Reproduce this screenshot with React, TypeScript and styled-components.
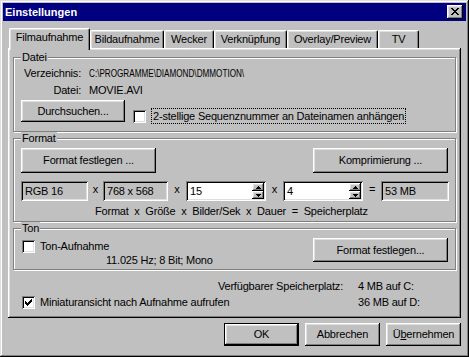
import React from "react";
import styled, { createGlobalStyle, css } from "styled-components";

const GlobalStyle = createGlobalStyle`
  html, body { margin: 0; padding: 0; background: #c0c0c0; }
  body {
    font-family: "Liberation Sans", Arial, sans-serif;
    font-size: 11px;
    line-height: 13px;
    letter-spacing: -0.2px;
    color: #000;
  }
  *, *::before, *::after { box-sizing: border-box; }
`;

const raised = css`
  box-shadow: inset -1px -1px #000, inset 1px 1px #fff, inset -2px -2px #808080,
    inset 2px 2px #dfdfdf;
`;

const sunken = css`
  box-shadow: inset 1px 1px #808080, inset -1px -1px #fff, inset 2px 2px #000,
    inset -2px -2px #dfdfdf;
`;

const Window = styled.div`
  width: 469px;
  height: 357px;
  background: #c0c0c0;
  padding: 3px;
  box-shadow: inset -1px -1px #000, inset 1px 1px #dfdfdf, inset -2px -2px #808080,
    inset 2px 2px #fff;
  display: flex;
  flex-direction: column;
`;

const TitleBar = styled.div`
  height: 18px;
  flex: none;
  background: #000080;
  color: #fff;
  display: flex;
  align-items: center;
  justify-content: space-between;
  padding: 0 3px 0 2px;
`;

const TitleText = styled.span`
  font-weight: bold;
  font-size: 11px;
  letter-spacing: 0;
`;

const CloseButton = styled.div`
  width: 16px;
  height: 14px;
  background: #c0c0c0;
  ${raised};
  display: flex;
  justify-content: center;
  padding-top: 3px;
`;

const Body = styled.div`
  flex: 1;
  display: flex;
  flex-direction: column;
  padding: 7px 5px 0 5px;
`;

const TabStrip = styled.div`
  display: flex;
  align-items: flex-end;
  height: 20px;
  padding-left: 1px;
`;

const Tab = styled.div<{ $w: number; $active?: boolean }>`
  position: relative;
  z-index: ${(p) => (p.$active ? 2 : 1)};
  width: ${(p) => p.$w}px;
  height: ${(p) => (p.$active ? 22 : 18)}px;
  margin-bottom: ${(p) => (p.$active ? -2 : 0)}px;
  background: #c0c0c0;
  border-top: 1px solid #fff;
  border-left: 1px solid #fff;
  border-right: 1px solid #000;
  border-radius: 2px 2px 0 0;
  box-shadow: inset -1px 0 #808080, inset 1px 1px #dfdfdf;
  text-align: center;
  padding-top: 2px;
  white-space: nowrap;
`;

const Panel = styled.div`
  height: 270px;
  flex: none;
  display: flex;
  flex-direction: column;
  gap: 6px;
  padding: 9px 5px 0 5px;
  box-shadow: inset -1px -1px #000, inset 1px 1px #fff, inset -2px -2px #808080,
    inset 2px 2px #dfdfdf;
`;

const Group = styled.div<{ $h: number }>`
  position: relative;
  flex: none;
  height: ${(p) => p.$h}px;
  border: 1px solid #808080;
  box-shadow: inset 1px 1px #fff, 1px 1px #fff;
  padding: 9px 7px 0 7px;
`;

const Legend = styled.span`
  position: absolute;
  top: -7px;
  left: 7px;
  padding: 0 1px;
  background: #c0c0c0;
`;

const InfoGrid = styled.div`
  display: grid;
  grid-template-columns: 60px auto;
  column-gap: 8px;
  row-gap: 4px;
`;

const InfoLabel = styled.span`
  text-align: right;
`;

const PathText = styled.span`
  display: inline-block;
  white-space: nowrap;
  letter-spacing: 0;
  transform: scaleX(0.74);
  transform-origin: left center;
`;

const Row = styled.div<{ $mt?: number; $justify?: string }>`
  display: flex;
  align-items: flex-start;
  justify-content: ${(p) => p.$justify || "flex-start"};
  margin-top: ${(p) => p.$mt || 0}px;
`;

const Button = styled.div<{ $w: number; $h: number; $default?: boolean }>`
  width: ${(p) => p.$w}px;
  height: ${(p) => p.$h}px;
  flex: none;
  background: #c0c0c0;
  display: flex;
  align-items: center;
  justify-content: center;
  white-space: nowrap;
  ${(p) =>
    p.$default
      ? css`
          border: 1px solid #000;
          ${raised};
        `
      : raised};
`;

const CheckRow = styled.div<{ $mt?: number; $ml?: number; $gap?: number }>`
  display: flex;
  align-items: center;
  gap: ${(p) => p.$gap ?? 5}px;
  margin-top: ${(p) => p.$mt || 0}px;
  margin-left: ${(p) => p.$ml || 0}px;
  white-space: nowrap;
`;

const CheckBox = styled.div`
  width: 13px;
  height: 13px;
  flex: none;
  background: #fff;
  ${sunken};
  padding: 3px;
  display: flex;
`;

const FocusLabel = styled.span`
  outline: 1px dotted #000;
  outline-offset: -1px;
  padding: 1px 2px;
  line-height: 14px;
`;

const FieldRow = styled.div`
  display: flex;
  align-items: center;
  height: 20px;
  margin-top: 8px;
`;

const Field = styled.div<{ $w: number; $edit?: boolean }>`
  width: ${(p) => p.$w}px;
  height: 20px;
  flex: none;
  background: ${(p) => (p.$edit ? "#fff" : "#c0c0c0")};
  ${sunken};
  padding: 2px 2px 2px 4px;
  display: flex;
  align-items: center;
  justify-content: space-between;
  white-space: nowrap;
`;

const Op = styled.span<{ $w: number }>`
  width: ${(p) => p.$w}px;
  text-align: center;
  flex: none;
  margin-top: -3px;
`;

const Spinner = styled.div`
  width: 12px;
  height: 16px;
  display: flex;
  flex-direction: column;
`;

const SpinButton = styled.div`
  flex: 1;
  background: #c0c0c0;
  ${raised};
  display: flex;
  align-items: center;
  justify-content: center;
`;

const Caption = styled.div`
  margin-top: 4px;
  padding-left: 74px;
  white-space: pre;
`;

const TonBody = styled.div`
  display: flex;
  justify-content: space-between;
  align-items: flex-start;
`;

const TonLeft = styled.div`
  display: flex;
  flex-direction: column;
  margin-top: 2px;
`;

const TonInfo = styled.div`
  margin-top: 1px;
  padding-left: 85px;
  white-space: nowrap;
`;

const Storage = styled.div`
  margin-top: 2px;
  display: grid;
  grid-template-columns: 1fr auto 98px;
  grid-template-rows: 16px 16px;
  column-gap: 15px;
  align-items: center;
  padding-left: 9px;
  white-space: nowrap;
`;

const SpanTwo = styled.div`
  grid-column: 1 / 3;
`;

const ButtonBar = styled.div`
  display: flex;
  justify-content: flex-end;
  gap: 6px;
  margin-top: 5px;
`;

const CloseGlyph = () => (
  <svg width="8" height="7" viewBox="0 0 8 7" shapeRendering="crispEdges">
    <path
      fill="#000"
      d="M0 0h2v1H0z M6 0h2v1H6z M1 1h2v1H1z M5 1h2v1H5z M2 2h4v1H2z M3 3h2v1H3z M2 4h4v1H2z M1 5h2v1H1z M5 5h2v1H5z M0 6h2v1H0z M6 6h2v1H6z"
    />
  </svg>
);

const CheckGlyph = () => (
  <svg width="7" height="7" viewBox="0 0 7 7" shapeRendering="crispEdges">
    <path
      fill="#000"
      d="M0 2h1v3H0z M1 3h1v3H1z M2 4h1v3H2z M3 3h1v3H3z M4 2h1v3H4z M5 1h1v3H5z M6 0h1v3H6z"
    />
  </svg>
);

const Arrow = ({ down }: { down?: boolean }) => (
  <svg width="5" height="3" viewBox="0 0 5 3" shapeRendering="crispEdges">
    <path
      fill="#000"
      d={down ? "M0 0h5v1H0z M1 1h3v1H1z M2 2h1v1H2z" : "M2 0h1v1H2z M1 1h3v1H1z M0 2h5v1H0z"}
    />
  </svg>
);

const Check = ({ checked }: { checked?: boolean }) => (
  <CheckBox>{checked && <CheckGlyph />}</CheckBox>
);

const SpinField = ({ w, value }: { w: number; value: string }) => (
  <Field $w={w} $edit style={{ paddingRight: 2 }}>
    <span>{value}</span>
    <Spinner>
      <SpinButton>
        <Arrow />
      </SpinButton>
      <SpinButton>
        <Arrow down />
      </SpinButton>
    </Spinner>
  </Field>
);

const tabs = [
  { label: "Filmaufnahme", w: 81, active: true },
  { label: "Bildaufnahme", w: 74 },
  { label: "Wecker", w: 50 },
  { label: "Verknüpfung", w: 73 },
  { label: "Overlay/Preview", w: 91 },
  { label: "TV", w: 41 },
];

export default function App() {
  return (
    <>
      <GlobalStyle />
      <Window>
        <TitleBar>
          <TitleText>Einstellungen</TitleText>
          <CloseButton>
            <CloseGlyph />
          </CloseButton>
        </TitleBar>
        <Body>
          <TabStrip>
            {tabs.map((t) => (
              <Tab key={t.label} $w={t.w} $active={t.active}>
                {t.label}
              </Tab>
            ))}
          </TabStrip>
          <Panel>
            <Group $h={75}>
              <Legend>Datei</Legend>
              <InfoGrid>
                <InfoLabel>Verzeichnis:</InfoLabel>
                <PathText>C:\PROGRAMME\DIAMOND\DMMOTION\</PathText>
                <InfoLabel>Datei:</InfoLabel>
                <span>MOVIE.AVI</span>
              </InfoGrid>
              <Row $mt={3}>
                <Button $w={104} $h={22}>
                  Durchsuchen...
                </Button>
                <CheckRow $mt={8} $ml={8}>
                  <Check />
                  <FocusLabel>2-stellige Sequenznummer an Dateinamen anhängen</FocusLabel>
                </CheckRow>
              </Row>
            </Group>

            <Group $h={84}>
              <Legend>Format</Legend>
              <Row $justify="space-between">
                <Button $w={135} $h={25}>
                  Format festlegen ...
                </Button>
                <Button $w={135} $h={25}>
                  Komprimierung ...
                </Button>
              </Row>
              <FieldRow>
                <Field $w={67}>RGB 16</Field>
                <Op $w={15}>x</Op>
                <Field $w={65}>768 x 568</Field>
                <Op $w={18}>x</Op>
                <SpinField w={80} value="15" />
                <Op $w={17}>x</Op>
                <SpinField w={80} value="4" />
                <Op $w={18}>=</Op>
                <Field $w={68}>53 MB</Field>
              </FieldRow>
              <Caption>{"Format  x  Größe  x  Bilder/Sek  x  Dauer  =  Speicherplatz"}</Caption>
            </Group>

            <Group $h={42}>
              <Legend>Ton</Legend>
              <TonBody>
                <TonLeft>
                  <CheckRow $ml={1}>
                    <Check />
                    <span>Ton-Aufnahme</span>
                  </CheckRow>
                  <TonInfo>11.025 Hz; 8 Bit; Mono</TonInfo>
                </TonLeft>
                <Button $w={135} $h={24}>
                  Format festlegen...
                </Button>
              </TonBody>
            </Group>

            <Storage>
              <span />
              <span>Verfügbarer Speicherplatz:</span>
              <span>4 MB auf C:</span>
              <SpanTwo>
                <CheckRow>
                  <Check checked />
                  <span>Miniaturansicht nach Aufnahme aufrufen</span>
                </CheckRow>
              </SpanTwo>
              <span>36 MB auf D:</span>
            </Storage>
          </Panel>
          <ButtonBar>
            <Button $w={75} $h={23} $default>
              OK
            </Button>
            <Button $w={75} $h={23}>
              Abbrechen
            </Button>
            <Button $w={75} $h={23}>
              <span>
                Ü<u>b</u>ernehmen
              </span>
            </Button>
          </ButtonBar>
        </Body>
      </Window>
    </>
  );
}
